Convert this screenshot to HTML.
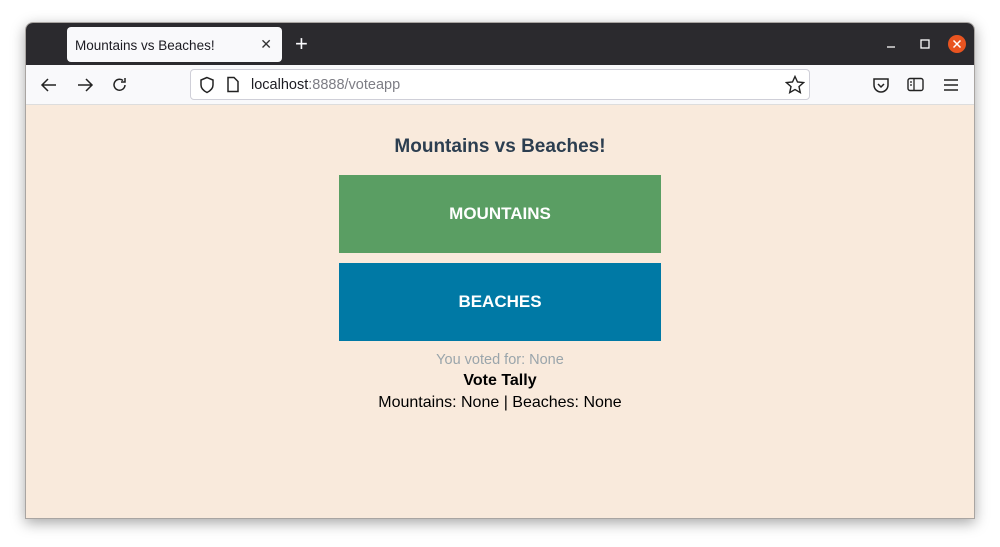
<!DOCTYPE html>
<html><head><meta charset="utf-8"><style>
*{margin:0;padding:0;box-sizing:border-box}
body{width:1000px;height:547px;background:#fff;font-family:"Liberation Sans",sans-serif;position:relative;overflow:hidden}
.win{position:absolute;left:25px;top:22px;width:950px;height:497px;border:1px solid #a9a5a2;border-radius:8px 8px 0 0;overflow:hidden;box-shadow:0 4px 14px rgba(0,0,0,.35)}
.title{position:absolute;left:0;top:0;width:100%;height:42px;background:#2b2a2e}
.tab{position:absolute;left:41px;top:4px;width:215px;height:35px;background:#f9f9fb;border-radius:4px;font-size:13.5px;color:#1c1b22;padding:11px 0 0 8px}
.tab .x{position:absolute;right:10px;top:9px;font-size:14px;color:#333}
.plus{position:absolute;left:269px;top:8px;color:#fbfbfe;font-size:22px}
.tool{position:absolute;left:0;top:42px;width:100%;height:40px;background:#f9f9fb;border-bottom:1px solid #ddd}
.url{position:absolute;left:164px;top:4px;width:620px;height:31px;background:#fff;border:1px solid #cfcfd8;border-radius:4px;font-size:14.5px;color:#1c1b22;padding:7px 0 0 60px}
.url span{color:#7d7d85}
.content{position:absolute;left:0;top:82px;width:100%;height:415px;background:#f9eadc;text-align:center}
h1{position:absolute;top:31px;width:100%;font-size:19px;color:#2c3e50;font-weight:bold}
.btn{position:absolute;left:313px;width:322px;height:78px;color:#fff;font-weight:bold;font-size:17px;line-height:78px}
.m{top:70px;background:#5a9e63}.b{top:158px;background:#0079a5}
.t{position:absolute;width:100%;font-size:14.5px}
svg{position:absolute}
</style></head><body>
<div class="win">
<div class="title">
<div class="tab">Mountains vs Beaches!<span class="x">✕</span></div>
<div class="plus">+</div>
<svg style="left:860px;top:16px" width="10" height="10"><path d="M1 8h8" stroke="#fff" stroke-width="1.3"/></svg>
<svg style="left:894px;top:16px" width="10" height="10"><rect x="1" y="1" width="8" height="8" fill="none" stroke="#fff" stroke-width="1.3"/></svg>
<svg style="left:921px;top:11px" width="20" height="20"><circle cx="10" cy="10" r="9" fill="#e95420"/><path d="M6.5 6.5l7 7M13.5 6.5l-7 7" stroke="#fff" stroke-width="1.5"/></svg>
</div>
<div class="tool">
<svg style="left:14px;top:12px" width="18" height="16"><path d="M16 8H2M8 2L2 8l6 6" fill="none" stroke="#222" stroke-width="1.5"/></svg>
<svg style="left:50px;top:12px" width="18" height="16"><path d="M2 8h14M10 2l6 6-6 6" fill="none" stroke="#222" stroke-width="1.5"/></svg>
<svg style="left:85px;top:11px" width="18" height="18"><path d="M14 9A5.5 5.5 0 1 1 12 4.5M14 2v4h-4" fill="none" stroke="#222" stroke-width="1.5"/></svg>
<div class="url">localhost<span>:8888/voteapp</span>
<svg style="left:8px;top:6px" width="16" height="18"><path d="M8 1.5L2 4v5c0 3.5 3 6 6 7.5 3-1.5 6-4 6-7.5V4z" fill="none" stroke="#222" stroke-width="1.5"/></svg>
<svg style="left:35px;top:6px" width="14" height="18"><path d="M2 1.5h6l4 4v10H2z" fill="none" stroke="#222" stroke-width="1.5"/></svg>
<svg style="left:594px;top:5px" width="20" height="20"><path d="M10 1.5l2.5 5.5 6 .6-4.5 4 1.3 6-5.3-3.1-5.3 3.1 1.3-6-4.5-4 6-.6z" fill="none" stroke="#222" stroke-width="1.4"/></svg>
</div>
<svg style="left:846px;top:11px" width="18" height="18"><path d="M2 3h14v6a7 7 0 0 1-14 0z M6 8l3 3 3-3" fill="none" stroke="#222" stroke-width="1.5"/></svg>
<svg style="left:881px;top:12px" width="18" height="16"><rect x="1" y="1.5" width="15" height="12" rx="2" fill="none" stroke="#222" stroke-width="1.4"/><path d="M7 1.5v12M3 5h2M3 8h2" stroke="#222" stroke-width="1.3"/></svg>
<svg style="left:917px;top:13px" width="16" height="14"><path d="M1 2h14M1 7h14M1 12h14" stroke="#222" stroke-width="1.5"/></svg>
</div>
<div class="content">
<h1>Mountains vs Beaches!</h1>
<div class="btn m">MOUNTAINS</div>
<div class="btn b">BEACHES</div>
<div class="t" style="top:247px;color:#9aa5ab">You voted for: None</div>
<div class="t" style="top:267px;font-weight:bold;font-size:16px;color:#000">Vote Tally</div>
<div class="t" style="top:289px;font-size:16px;color:#000">Mountains: None | Beaches: None</div>
</div>
</div>
</body></html>
